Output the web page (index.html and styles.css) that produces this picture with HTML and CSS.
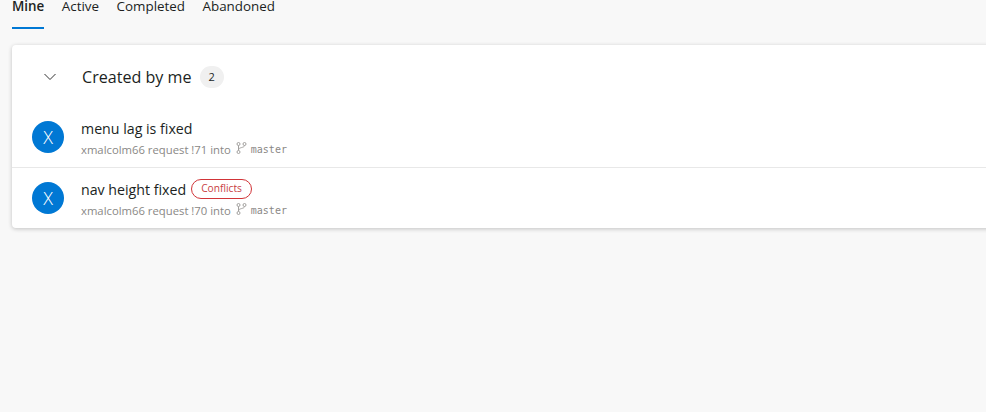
FILE: index.html
```html
<!DOCTYPE html>
<html>
<head>
	<meta charset="UTF-8">
	<title>Pull requests</title>
	<link rel="stylesheet" href="styles.css">
</head>
<body>
<div class="tabs">
	<a class="tab tab-active">Mine</a>
	<a class="tab">Active</a>
	<a class="tab">Completed</a>
	<a class="tab">Abandoned</a>
</div>

<div class="card">
	<div class="card-head">
		<svg class="chevron" width="12" height="8" viewBox="0 0 12 8"><path d="M0.5 1 L6 6.500 L11.500 1" fill="none" stroke="#333" stroke-width="1"/></svg>
		<span class="card-title">Created by me</span>
		<span class="count">2</span>
	</div>

	<div class="row row-first">
		<div class="avatar">X</div>
		<div class="row-text">
			<div class="row-title"><span>menu lag is fixed</span></div>
			<div class="row-sub">
				<span>xmalcolm66 request !71 into</span>
				<svg class="branch" width="11" height="12" viewBox="0 0 11 12"><path d="M2.500 3.500 V8.500 M8.500 3.500 C8.500 6 2.500 5 2.500 8" fill="none" stroke="#a19f9d"/><circle cx="2.500" cy="2" r="1.500" fill="none" stroke="#a19f9d"/><circle cx="8.500" cy="2" r="1.500" fill="none" stroke="#a19f9d"/><circle cx="2.500" cy="10" r="1.500" fill="none" stroke="#a19f9d"/></svg>
				<span class="branch-name">master</span>
			</div>
		</div>
	</div>

	<div class="row">
		<div class="avatar">X</div>
		<div class="row-text">
			<div class="row-title"><span>nav height fixed</span><span class="pill">Conflicts</span></div>
			<div class="row-sub">
				<span>xmalcolm66 request !70 into</span>
				<svg class="branch" width="11" height="12" viewBox="0 0 11 12"><path d="M2.500 3.500 V8.500 M8.500 3.500 C8.500 6 2.500 5 2.500 8" fill="none" stroke="#a19f9d"/><circle cx="2.500" cy="2" r="1.500" fill="none" stroke="#a19f9d"/><circle cx="8.500" cy="2" r="1.500" fill="none" stroke="#a19f9d"/><circle cx="2.500" cy="10" r="1.500" fill="none" stroke="#a19f9d"/></svg>
				<span class="branch-name">master</span>
			</div>
		</div>
	</div>
</div>
</body>
</html>
```

FILE: styles.css
```css
html, body {
	height: 100%;
	margin: 0;
	overflow: hidden;
}

body {
	background: #f8f8f8;
	color: #201f1e;
	font-family: "Open Sans", "Noto Sans", sans-serif;
	font-size: 13.4px;
}

.tabs {
	display: flex;
	gap: 17.5px;
	height: 29px;
	margin-bottom: 16px;
	padding: 0 12px;
}

.tab {
	height: 29px;
	box-sizing: border-box;
	line-height: 12px;
	border-bottom: 2px solid transparent;
}

.tab-active {
	font-weight: 600;
	border-bottom-color: #0078d4;
}

.card {
	width: 1000px;
	height: 183px;
	margin-left: 12px;
	background: #fff;
	border-radius: 4px;
	box-shadow: 0 1px 4px rgba(0, 0, 0, 0.22);
}

.card-head {
	display: flex;
	align-items: center;
	box-sizing: border-box;
	height: 62px;
	padding: 2px 0 0 32px;
}

.chevron {
	margin-right: 26px;
}

.card-title {
	font-size: 16.1px;
	margin-right: 8px;
}

.count {
	width: 24px;
	height: 22px;
	line-height: 22px;
	border-radius: 11px;
	background: #f0f0f0;
	font-size: 11px;
	text-align: center;
}

.row {
	display: flex;
	align-items: center;
	height: 60px;
	padding-left: 20px;
}

.row-first {
	border-bottom: 1px solid #e8e8e8;
}

.avatar {
	width: 32px;
	height: 32px;
	margin-right: 17px;
	border-radius: 50%;
	background: #0078d4;
	color: #fff;
	font-size: 18px;
	font-weight: 300;
	line-height: 32px;
	text-align: center;
}

.row-text {
	margin-top: 3px;
}

.row-title {
	display: flex;
	align-items: center;
	height: 20px;
	font-size: 14.2px;
}

.row-sub {
	display: flex;
	align-items: center;
	height: 20px;
	padding-top: 1px;
	font-size: 11.3px;
	color: #8a8886;
}

.branch {
	margin: -3px 4px 0 5px;
}

.branch-name {
	font-family: "DejaVu Sans Mono", monospace;
	font-size: 10px;
}

.pill {
	margin-left: 5px;
	padding: 0 9px;
	height: 18px;
	line-height: 17px;
	border: 1px solid #d13438;
	border-radius: 10px;
	color: #c8403f;
	font-size: 10.2px;
}
```
